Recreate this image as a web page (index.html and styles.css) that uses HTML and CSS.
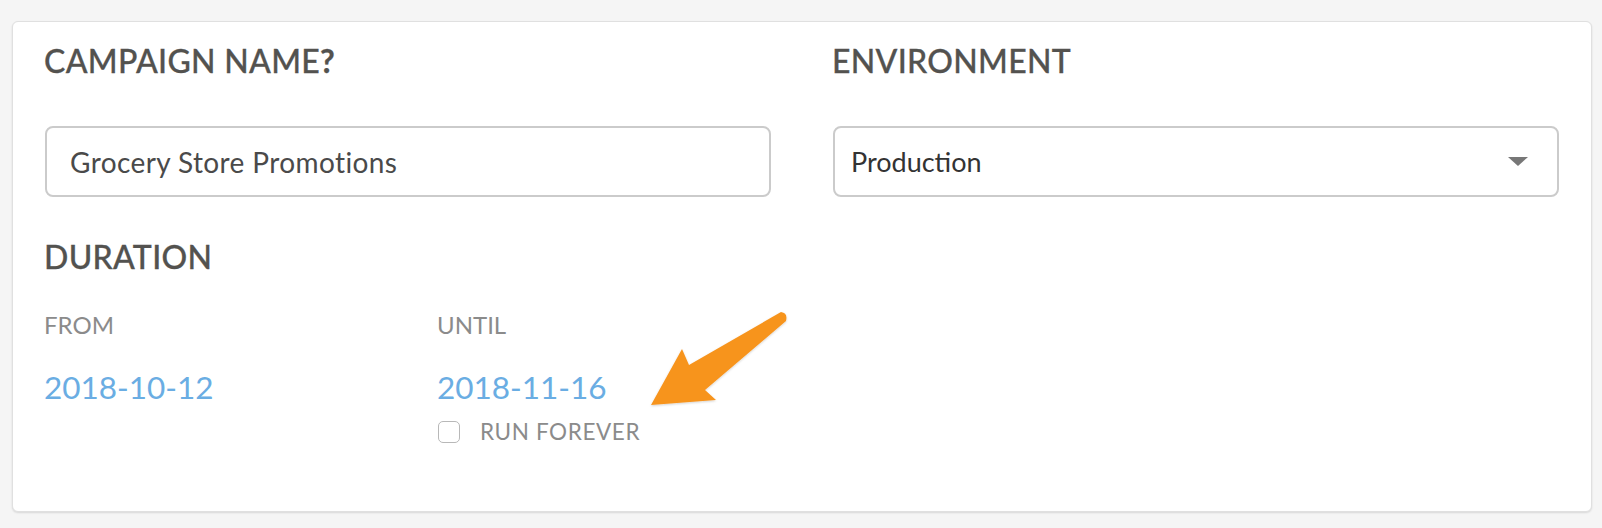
FILE: index.html
```html
<!DOCTYPE html>
<html>
<head>
<meta charset="utf-8">
<link rel="stylesheet" href="styles.css">
</head>
<body>
<div class="card">
  <div class="row">
    <div class="col">
      <h2 class="heading">CAMPAIGN NAME<span class="q">?</span></h2>
      <div class="field text-field">Grocery Store Promotions</div>
      <h2 class="heading duration">DURATION</h2>
      <div class="dates">
        <div class="date-col">
          <div class="label">FROM</div>
          <div class="date">2018-10-12</div>
        </div>
        <div class="date-col">
          <div class="label">UNTIL</div>
          <div class="date">2018-11-16</div>
          <label class="check-row"><span class="checkbox"></span><span class="check-label">RUN FOREVER</span></label>
        </div>
      </div>
    </div>
    <div class="col">
      <h2 class="heading">ENVIRONMENT</h2>
      <div class="field select-field"><span>Production</span><span class="caret"></span></div>
    </div>
  </div>
</div>
<svg class="pointer" width="1602" height="528" viewBox="0 0 1602 528">
  <defs>
    <filter id="sh" x="-20%" y="-20%" width="140%" height="140%">
      <feDropShadow dx="0" dy="1" stdDeviation="1.2" flood-color="#000" flood-opacity="0.18"/>
    </filter>
  </defs>
  <path filter="url(#sh)" fill="#f7941e" d="M781 312 Q788 313 786 321 L705 390 L716 400 L651 405 L682 349 L689 365 Z"/>
</svg>
</body>
</html>
```
FILE: styles.css
```css
html, body {
  margin: 0;
  padding: 0;
}
body {
  background: #f5f5f5;
  font-family: Lato, "Noto Sans", sans-serif;
  width: 1602px;
  height: 528px;
  position: relative;
  overflow: hidden;
}
.card {
  margin: 21px 10px 0 12px;
  background: #fff;
  border: 1px solid #e0e0e0;
  border-radius: 6px;
  box-shadow: 0 1px 2px rgba(0,0,0,0.12);
  padding: 19px 32px 68px 32px;
  box-sizing: border-box;
  height: 491px;
}
.row {
  display: grid;
  grid-template-columns: 726px 726px;
  column-gap: 62px;
}
.heading {
  margin: 0 0 0 -1px;
  font-size: 32px;
  line-height: 40px;
  font-weight: 500;
  color: #53524f;
  letter-spacing: 0.3px;
  -webkit-text-stroke: 0.3px #53524f;
}
.q { font-weight: 700; }
.field {
  margin-top: 45px;
  height: 71px;
  box-sizing: border-box;
  border: 2px solid #cbcbcb;
  border-radius: 8px;
  display: flex;
  align-items: center;
  font-size: 27px;
}
.text-field {
  padding-left: 23px;
  color: #4a4a4a;
  font-size: 28px;
  letter-spacing: 0.4px;
}
.select-field {
  padding-left: 16px;
  padding-right: 29px;
  justify-content: space-between;
  color: #333;
}
.caret {
  width: 0;
  height: 0;
  border-left: 10px solid transparent;
  border-right: 10px solid transparent;
  border-top: 9px solid #777;
}
.duration {
  margin-top: 40px;
}
.dates {
  display: grid;
  grid-template-columns: 333px 333px;
  column-gap: 60px;
  margin-top: 33px;
}
.label {
  font-size: 24px;
  line-height: 30px;
  color: #8b8b8b;
  margin-left: -1px;
}
.date {
  margin-top: 27px;
  font-size: 31.5px;
  line-height: 40px;
  color: #6aade3;
  margin-left: -1px;
}
.check-row {
  margin-top: 14px;
  display: flex;
  align-items: center;
  gap: 20px;
}
.checkbox {
  width: 22px;
  height: 22px;
  box-sizing: border-box;
  border: 1.5px solid #b8b8b8;
  border-radius: 5px;
  background: #fff;
}
.check-label {
  font-size: 22.5px;
  line-height: 22px;
  color: #8b8b8b;
  letter-spacing: 0.6px;
}
.pointer {
  position: absolute;
  left: 0;
  top: 0;
  pointer-events: none;
}
```
